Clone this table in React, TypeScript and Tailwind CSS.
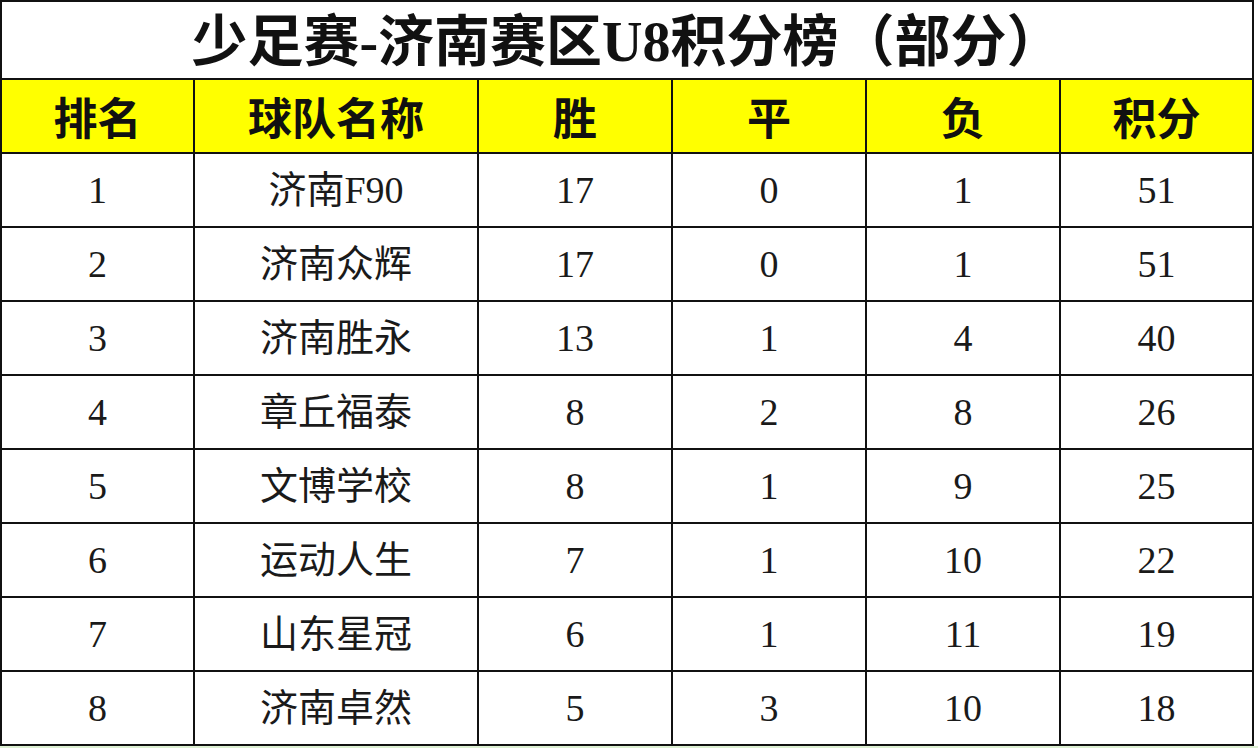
const rows = [
  [1, "济南F90", 17, 0, 1, 51],
  [2, "济南众辉", 17, 0, 1, 51],
  [3, "济南胜永", 13, 1, 4, 40],
  [4, "章丘福泰", 8, 2, 8, 26],
  [5, "文博学校", 8, 1, 9, 25],
  [6, "运动人生", 7, 1, 10, 22],
  [7, "山东星冠", 6, 1, 11, 19],
  [8, "济南卓然", 5, 3, 10, 18],
];

const headers = ["排名", "球队名称", "胜", "平", "负", "积分"];
const widths = ["w-[193px]", "w-[284px]", "w-[194px]", "w-[194px]", "w-[194px]", "w-[193px]"];

export default function App() {
  return (
    <div className="w-[1258px] h-[748px] bg-white overflow-hidden">
      <table
        className="w-[1254px] table-fixed border-collapse border-2 border-[#111] text-[#111]"
        style={{ fontFamily: '"Liberation Serif", "Noto Sans CJK SC", serif' }}
      >
        <colgroup>
          {widths.map((w, i) => (
            <col key={i} className={w} />
          ))}
        </colgroup>
        <thead>
          <tr className="h-[78px]">
            <th colSpan={6} className="border-2 border-[#111] text-[56px] font-bold leading-none pt-1">
              少足赛-济南赛区U8积分榜（部分）
            </th>
          </tr>
          <tr className="h-[74px] bg-[#ffff00]">
            {headers.map((h) => (
              <th
                key={h}
                className="border-2 border-[#111] text-[44px] font-bold leading-none"
                style={{ fontFamily: '"Noto Sans CJK SC", sans-serif' }}
              >
                {h}
              </th>
            ))}
          </tr>
        </thead>
        <tbody>
          {rows.map((r) => (
            <tr key={r[0]} className="h-[74px]">
              {r.map((c, i) => (
                <td key={i} className="border-2 border-[#111] text-center text-[38px] leading-none text-[#1a1a1a]">
                  {c}
                </td>
              ))}
            </tr>
          ))}
        </tbody>
      </table>
      <div className="h-[4px] bg-[#dcefd2]" />
    </div>
  );
}
